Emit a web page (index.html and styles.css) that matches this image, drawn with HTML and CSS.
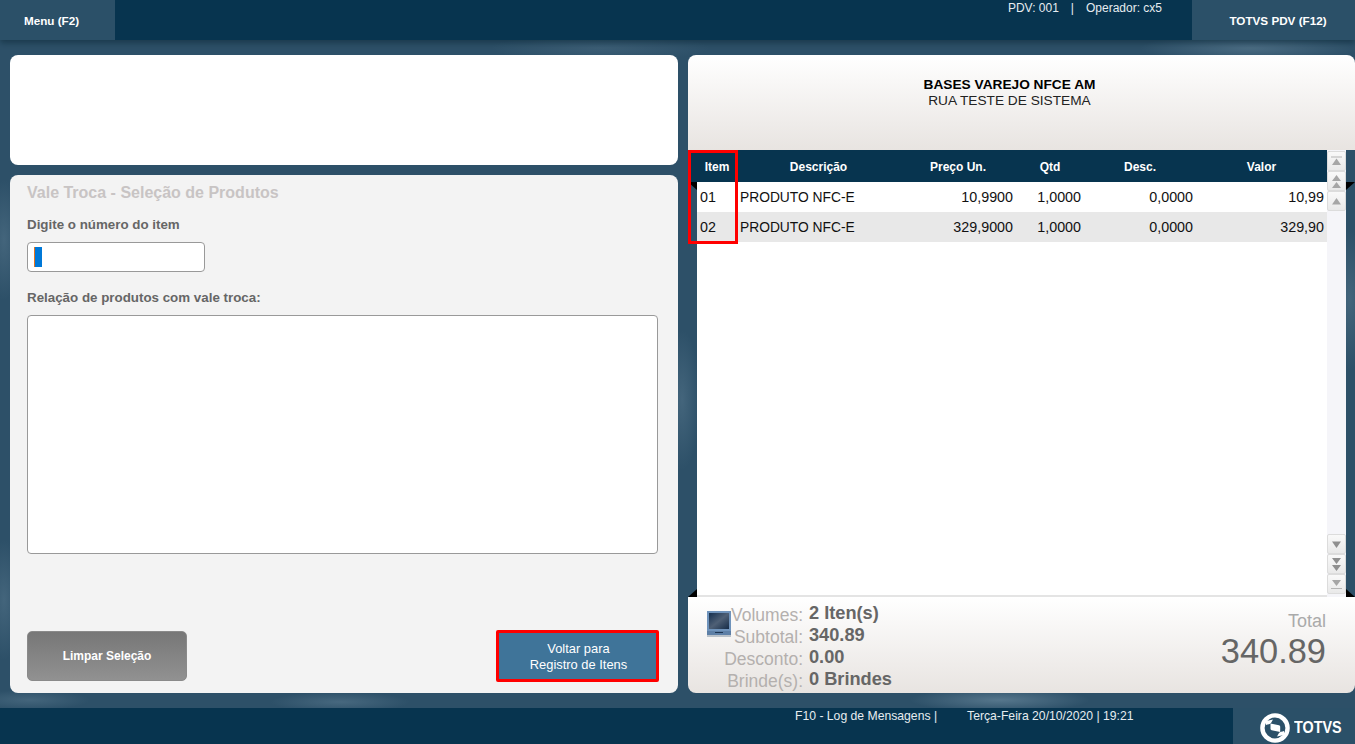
FILE: index.html
```html
<!DOCTYPE html>
<html lang="pt-BR">
<head>
  <meta charset="UTF-8" />
  <title>TOTVS PDV</title>
  <link rel="stylesheet" href="styles.css">
</head>
<body>
  <header class="topbar">
    <div class="top-btn menu-btn">Menu (F2)</div>
    <div class="top-info">
      <span>PDV: 001</span>
      <span>|</span>
      <span>Operador: cx5</span>
    </div>
    <div class="top-btn pdv-btn">TOTVS PDV (F12)</div>
  </header>

  <main class="content">
    <div class="left-col">
      <section class="card blank-card"></section>
      <section class="card select-card">
        <h2 class="select-title">Vale Troca - Seleção de Produtos</h2>
        <label class="field-label">Digite o número do item</label>
        <div class="item-input"><span class="caret"></span></div>
        <label class="field-label list-label">Relação de produtos com vale troca:</label>
        <div class="item-list"></div>
        <div class="actions">
          <button class="btn btn-clear">Limpar Seleção</button>
          <button class="btn btn-back">Voltar para<br>Registro de Itens</button>
        </div>
      </section>
    </div>

    <section class="receipt">
      <div class="receipt-head">
        <strong>BASES VAREJO NFCE AM</strong>
        <span>RUA TESTE DE SISTEMA</span>
      </div>

      <div class="receipt-body">
        <div class="items">
          <div class="row row-head">
            <div>Item</div>
            <div>Descrição</div>
            <div>Preço Un.</div>
            <div>Qtd</div>
            <div>Desc.</div>
            <div>Valor</div>
          </div>
          <div class="row row-item">
            <div>01</div>
            <div>PRODUTO NFC-E</div>
            <div>10,9900</div>
            <div>1,0000</div>
            <div>0,0000</div>
            <div>10,99</div>
          </div>
          <div class="row row-item row-alt">
            <div>02</div>
            <div>PRODUTO NFC-E</div>
            <div>329,9000</div>
            <div>1,0000</div>
            <div>0,0000</div>
            <div>329,90</div>
          </div>
          <div class="items-rest"></div>
        </div>

        <div class="scrollbar">
          <div class="scroll-group">
            <div class="scroll-btn"><svg width="13" height="13" viewBox="0 0 13 13"><path d="M1 2h11" stroke="#b5b5b5"/><path d="M6.500 3.500 11 10H2z" fill="#a6a6a6"/></svg></div>
            <div class="scroll-btn"><svg width="13" height="15" viewBox="0 0 13 15"><path d="M6.500 1 11 7H2zM6.500 8 11 14H2z" fill="#a6a6a6"/></svg></div>
            <div class="scroll-btn"><svg width="13" height="13" viewBox="0 0 13 13"><path d="M6.500 3 11 9.500H2z" fill="#a6a6a6"/></svg></div>
          </div>
          <div class="scroll-group">
            <div class="scroll-btn"><svg width="13" height="13" viewBox="0 0 13 13"><path d="M6.500 10 2 3.500h9z" fill="#8f8f8f"/></svg></div>
            <div class="scroll-btn"><svg width="13" height="15" viewBox="0 0 13 15"><path d="M6.500 7 2 1h9zM6.500 14 2 8h9z" fill="#8f8f8f"/></svg></div>
            <div class="scroll-btn"><svg width="13" height="13" viewBox="0 0 13 13"><path d="M6.500 8 2 2h9z" fill="#a6a6a6"/><path d="M1 10.500h11" stroke="#b5b5b5"/></svg></div>
          </div>
        </div>

        <i class="corner corner-tl"></i>
        <i class="corner corner-tr"></i>
        <i class="corner corner-bl"></i>
        <i class="corner corner-br"></i>
        <div class="mark mark-item"></div>
      </div>

      <div class="receipt-foot">
        <svg class="monitor" width="29" height="30" viewBox="0 0 29 30">
          <defs>
            <linearGradient id="screen" x1="0" y1="0" x2="1" y2="1">
              <stop offset="0" stop-color="#16304f"/>
              <stop offset="0.5" stop-color="#4f6076"/>
              <stop offset="1" stop-color="#152c48"/>
            </linearGradient>
          </defs>
          <rect x="2" y="1" width="24" height="20" fill="#6f93bb"/>
          <rect x="4" y="3" width="20" height="16" fill="url(#screen)"/>
          <rect x="2" y="21" width="24" height="4" fill="#5d7fa6"/>
          <rect x="10" y="22" width="8" height="1" fill="#1d3552"/>
          <rect x="2" y="25" width="24" height="2" fill="#b9c1c9"/>
        </svg>
        <dl class="totals">
          <dt>Volumes:</dt><dd>2 Iten(s)</dd>
          <dt>Subtotal:</dt><dd>340.89</dd>
          <dt>Desconto:</dt><dd>0.00</dd>
          <dt>Brinde(s):</dt><dd>0 Brindes</dd>
        </dl>
        <div class="grand-total">
          <span class="grand-label">Total</span>
          <span class="grand-value">340.89</span>
        </div>
      </div>
    </section>
  </main>

  <footer class="bottombar">
    <div class="status">F10 - Log de Mensagens |</div>
    <div class="status status-date">Terça-Feira 20/10/2020 | 19:21</div>
    <div class="logo-box">
      <svg width="30" height="30" viewBox="0 0 30 30">
        <circle cx="15" cy="15" r="12.600" fill="none" stroke="#fff" stroke-width="4.400"/>
        <path d="M6 8 13 6.500 11 10c-1 1-3 1.500-5 2zM24 22 17 23.500 19 20c1-1 3-1.500 5-2z" fill="#fff"/>
        <path d="M10.500 10.500 19 12.300c.8.200 1.200.7 1.200 1.500v5.200L11.700 17.200c-.8-.2-1.200-.7-1.200-1.500z" fill="#fff"/>
      </svg>
      <span class="logo-text">TOTVS</span>
    </div>
  </footer>
</body>
</html>
```

FILE: styles.css
```css
* {
  box-sizing: border-box;
}
html, body {
  height: 100%;
}
body {
  margin: 0;
  display: flex;
  flex-direction: column;
  overflow: hidden;
  font-family: "Liberation Sans", Arial, sans-serif;
  color: #666;
  background:
    radial-gradient(ellipse 90px 12px at 1000px 700px, rgba(120,150,170,.55), transparent),
    radial-gradient(ellipse 70px 10px at 340px 702px, rgba(120,150,170,.35), transparent),
    radial-gradient(ellipse 60px 10px at 30px 700px, rgba(120,150,170,.3), transparent),
    radial-gradient(ellipse 110px 14px at 1250px 48px, rgba(120,150,170,.4), transparent),
    radial-gradient(ellipse 110px 14px at 600px 48px, rgba(120,150,170,.2), transparent),
    radial-gradient(ellipse 18px 60px at 4px 240px, rgba(120,150,170,.3), transparent),
    radial-gradient(ellipse 18px 60px at 4px 600px, rgba(120,150,170,.3), transparent),
    radial-gradient(ellipse 18px 70px at 682px 400px, rgba(120,150,170,.3), transparent),
    radial-gradient(ellipse 18px 70px at 1350px 300px, rgba(120,150,170,.3), transparent),
    #2d5068;
}

/* barra superior */
.topbar {
  height: 40px;
  flex: none;
  display: flex;
  background: #07344f;
  color: #fff;
  box-shadow: 0 3px 6px rgba(5, 30, 45, .45);
}
.top-btn {
  display: flex;
  align-items: center;
  justify-content: center;
  background: #2b5068;
  font-size: 11.700px;
  font-weight: bold;
}
.menu-btn {
  width: 115px;
  padding-right: 12px;
}
.pdv-btn {
  width: 163px;
  padding-left: 9px;
}
.top-info {
  flex: 1;
  display: flex;
  justify-content: flex-end;
  gap: 12px;
  padding: 1px 30px 0 0;
  font-size: 12px;
  line-height: 14px;
  color: #e6ecf0;
}

.content {
  flex: 1;
  min-height: 0;
  display: grid;
  grid-template-columns: 668px 667px;
  gap: 10px;
  padding: 15px 0 15px 10px;
}
.left-col {
  display: flex;
  flex-direction: column;
  gap: 10px;
}
.card {
  border-radius: 8px;
}
.blank-card {
  height: 110px;
  background: #fff;
}
.select-card {
  flex: 1;
  display: flex;
  flex-direction: column;
  padding: 9px 20px 11px 17px;
  background: #f3f3f3;
}
.select-title {
  margin: 0 0 15px;
  font-size: 16px;
  line-height: 18px;
  color: #c8c4c4;
}
.field-label {
  display: block;
  font-size: 13.350px;
  line-height: 15px;
  font-weight: bold;
  color: #666;
}
.item-input {
  width: 178px;
  height: 30px;
  margin-top: 10px;
  padding: 4px 6px;
  background: #fff;
  border: 1px solid #999;
  border-radius: 4px;
}
.caret {
  display: block;
  width: 8px;
  height: 20px;
  background: #0078d7;
  border-left: 1px solid #e8741c;
}
.list-label {
  margin-top: 18px;
}
.item-list {
  height: 239px;
  margin-top: 10px;
  background: #fff;
  border: 1px solid #999;
  border-radius: 4px;
}
.actions {
  margin-top: auto;
  display: flex;
  justify-content: space-between;
  align-items: center;
}
.btn {
  font-family: inherit;
  font-size: 12px;
  line-height: 16px;
  color: #fff;
  cursor: pointer;
}
.btn-clear {
  width: 160px;
  height: 50px;
  font-weight: bold;
  border: 1px solid #8a8a8a;
  border-radius: 5px;
  background: linear-gradient(#777, #919191);
}
.btn-back {
  width: 163px;
  height: 52px;
  margin-right: -1px;
  padding: 2px 0 0 2px;
  font-size: 12.900px;
  background: #3f7499;
  border: 3px solid #f00;
  border-radius: 2px;
}

/* cupom */
.receipt {
  position: relative;
  display: flex;
  flex-direction: column;
}
.receipt-head {
  height: 95px;
  flex: none;
  display: flex;
  flex-direction: column;
  align-items: center;
  padding: 22px 24px 0 0;
  font-size: 13.700px;
  line-height: 16px;
  color: #000;
  background: linear-gradient(#fff, #e8e4e1);
  border-radius: 8px 8px 0 0;
}
.receipt-head span {
  color: #222;
}
.receipt-body {
  position: relative;
  flex: 1;
  min-height: 0;
  display: flex;
  padding-right: 9px;
}
.items {
  flex: 1;
  display: flex;
  flex-direction: column;
}
.row {
  display: grid;
  grid-template-columns: 40px 163px 116px 68px 112px 131px;
  align-items: center;
}
.row-head {
  height: 32px;
  padding: 2px 0 0 9px;
  background: #07344f;
  color: #fff;
  font-size: 12px;
  font-weight: bold;
  text-align: center;
}
.row-item {
  height: 30px;
  margin-left: 9px;
  background: #fff;
  color: #111;
  font-size: 14.300px;
  text-align: right;
}
.row-item div {
  padding: 0 3px;
}
.row-item div:nth-child(1),
.row-item div:nth-child(2) {
  text-align: left;
}
.row-item div:nth-child(2) {
  font-size: 13.800px;
}
.row-alt {
  background: #e8e8e8;
}
.items-rest {
  flex: 1;
  margin-left: 9px;
  background: #fff;
  border-bottom: 2px solid #e4e4e4;
}
.scrollbar {
  width: 19px;
  display: flex;
  flex-direction: column;
  justify-content: space-between;
  padding: 1px 0 3px;
  background: #f5f5f9;
}
.scroll-btn {
  height: 20px;
  display: flex;
  align-items: center;
  justify-content: center;
  background: linear-gradient(#f9f9f9, #e9e9e9);
  border: 1px solid #dcdcdc;
  border-radius: 2px;
}
.corner {
  position: absolute;
  width: 9px;
  height: 8px;
  background: #000;
}
.corner-tl {
  left: 0;
  top: 32px;
  clip-path: polygon(0 0, 100% 0, 100% 100%);
}
.corner-tr {
  right: 0;
  top: 32px;
  clip-path: polygon(0 0, 100% 0, 0 100%);
}
.corner-bl {
  left: 0;
  bottom: 0;
  clip-path: polygon(100% 0, 100% 100%, 0 100%);
}
.corner-br {
  right: 0;
  bottom: 0;
  clip-path: polygon(0 0, 100% 100%, 0 100%);
}
.mark {
  position: absolute;
  border: 3px solid #f00;
}
.mark-item {
  left: 0;
  top: 0;
  width: 50px;
  height: 94px;
}

.receipt-foot {
  height: 96px;
  flex: none;
  position: relative;
  display: flex;
  justify-content: space-between;
  padding: 5px 29px 0 0;
  background: linear-gradient(#fff, #e8e4e1);
  border-radius: 0 0 8px 8px;
}
.monitor {
  position: absolute;
  left: 17px;
  top: 13px;
}
.totals {
  margin: 0;
  display: grid;
  grid-template-columns: 115px auto;
  column-gap: 6px;
  grid-auto-rows: 22px;
  align-items: center;
  line-height: 22px;
}
.totals dt {
  position: relative;
  top: 2px;
  text-align: right;
  font-size: 17.500px;
  color: #b4b0ae;
}
.totals dd {
  margin: 0;
  font-size: 18.200px;
  font-weight: bold;
  color: #666;
}
.grand-total {
  display: flex;
  flex-direction: column;
  align-items: flex-end;
  padding-top: 9px;
}
.grand-label {
  font-size: 18px;
  line-height: 20px;
  color: #aaa;
}
.grand-value {
  font-size: 34.400px;
  line-height: 40px;
  color: #666;
}

/* rodape */
.bottombar {
  height: 36px;
  flex: none;
  display: flex;
  background: #07344f;
  color: #fff;
  font-size: 12.200px;
}
.status {
  padding: 1px 0 0 795px;
  line-height: 14px;
  color: #e6ecf0;
}
.status-date {
  padding-left: 30px;
}
.logo-box {
  width: 122px;
  margin-left: auto;
  display: flex;
  align-items: center;
  gap: 4px;
  padding: 3px 0 0 27px;
  background: #2b5068;
}
.logo-text {
  font-size: 16.500px;
  font-weight: bold;
  transform: scaleX(.87);
  transform-origin: left center;
}
```
